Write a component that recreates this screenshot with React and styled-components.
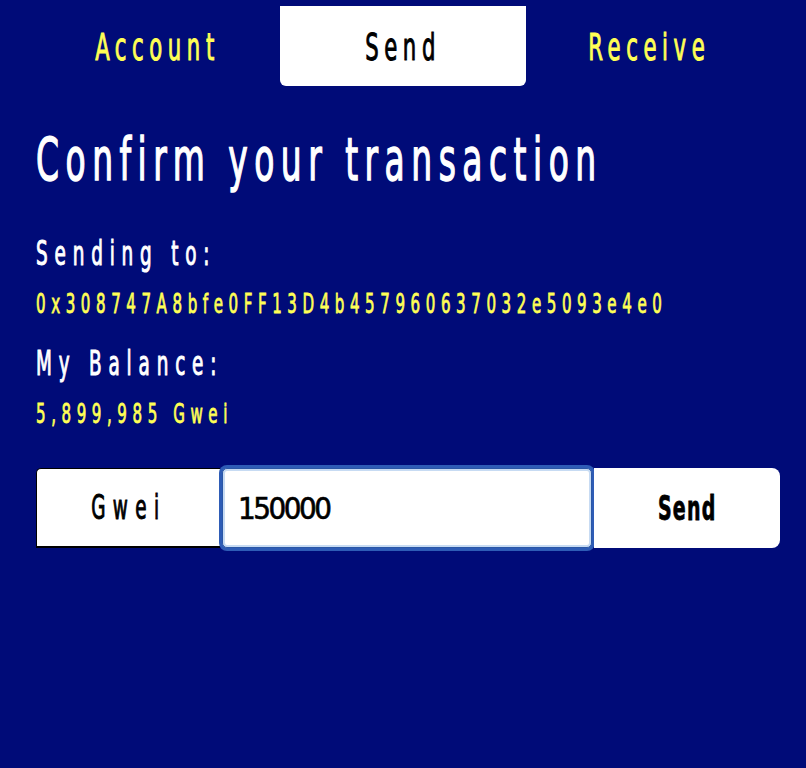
import React, { useState } from 'react'
import styled, { createGlobalStyle } from 'styled-components'

const FONT = `"DejaVu Sans Condensed", "DejaVu Sans", sans-serif`
// no narrow display face is installed, so condense the glyphs horizontally
const SQUEEZE = 0.62

const GlobalStyle = createGlobalStyle`
  html, body {
    margin: 0;
    background: #000b78;
    min-height: 100%;
  }
  body {
    font-family: ${FONT};
    color: #fff;
  }
`

const Page = styled.div`
  min-height: 768px;
  background: #000b78;
  padding: 6px 34px 0;
  box-sizing: border-box;
`

const Tabs = styled.nav`
  display: grid;
  grid-template-columns: repeat(3, 246px);
`

const Tab = styled.div`
  height: 80px;
  display: flex;
  align-items: center;
  justify-content: center;
  color: ${p => (p.$active ? '#000' : '#ffff55')};
  background: ${p => (p.$active ? '#fff' : 'transparent')};
  border-radius: 0 0 6px 6px;
  cursor: pointer;
`

const TabText = styled.span`
  display: inline-block;
  font-size: 38px;
  letter-spacing: 9px;
  padding-top: 2px;
  -webkit-text-stroke: 1px currentColor;
  transform: scaleX(${SQUEEZE});
  transform-origin: center;
`

const Body = styled.main`
  padding-left: 2px;
`

const Title = styled.h1`
  margin: 38px 0 0;
  font-size: 59px;
  line-height: 72px;
  font-weight: normal;
  letter-spacing: 10.5px;
  white-space: nowrap;
  -webkit-text-stroke: 1.4px currentColor;
  transform: scaleX(${SQUEEZE});
  transform-origin: left;
`

const Label = styled.h3`
  margin: ${p => p.$top}px 0 0;
  font-size: 33px;
  line-height: 40px;
  font-weight: normal;
  letter-spacing: 11px;
  white-space: nowrap;
  -webkit-text-stroke: 1px currentColor;
  transform: scaleX(${SQUEEZE});
  transform-origin: left;
`

const Value = styled.p`
  margin: 14px 0 0;
  font-size: 27px;
  line-height: 32px;
  color: #ffff55;
  letter-spacing: 9px;
  white-space: nowrap;
  -webkit-text-stroke: 0.8px currentColor;
  transform: scaleX(${SQUEEZE});
  transform-origin: left;
`

const Row = styled.div`
  display: flex;
  align-items: stretch;
  height: 80px;
  margin-top: 38px;
  width: 744px;
`

const Unit = styled.div`
  flex: 0 0 184px;
  box-sizing: border-box;
  background: #fff;
  color: #000;
  border: 1px solid #000;
  border-bottom-width: 2px;
  border-right: none;
  border-radius: 5px 0 0 0;
  display: flex;
  align-items: center;
  justify-content: center;
`

const UnitText = styled.span`
  display: inline-block;
  font-size: 33px;
  letter-spacing: 12px;
  -webkit-text-stroke: 1px currentColor;
  transform: scaleX(${SQUEEZE});
`

const Amount = styled.input`
  flex: 0 0 370px;
  box-sizing: border-box;
  margin: 0 0 0 2px;
  padding: 0 0 0 15px;
  font-family: ${FONT};
  font-size: 31px;
  letter-spacing: -2.5px;
  -webkit-text-stroke: 0.6px currentColor;
  color: #000;
  background: #fff;
  border: 1px solid #2b57a6;
  border-radius: 5px;
  box-shadow: inset 0 0 0 2px #c7dbf3, 0 0 0 3px #2e5cb6;
  outline: none;
`

const SendButton = styled.button`
  flex: 0 0 186px;
  margin: 0 0 0 2px;
  padding: 0;
  border: none;
  border-radius: 0 8px 8px 0;
  background: #fff;
  color: #000;
  font-family: ${FONT};
  cursor: pointer;
`

const SendText = styled.span`
  display: inline-block;
  font-size: 34px;
  font-weight: bold;
  letter-spacing: 2px;
  -webkit-text-stroke: 0.8px currentColor;
  transform: scaleX(${SQUEEZE});
`

export default function App() {
  const [amount, setAmount] = useState('150000')
  return (
    <Page>
      <GlobalStyle />
      <Tabs>
        <Tab><TabText>Account</TabText></Tab>
        <Tab $active><TabText>Send</TabText></Tab>
        <Tab><TabText>Receive</TabText></Tab>
      </Tabs>
      <Body>
        <Title>Confirm your transaction</Title>
        <Label $top={38}>Sending to:</Label>
        <Value>0x308747A8bfe0FF13D4b457960637032e5093e4e0</Value>
        <Label $top={24}>My Balance:</Label>
        <Value>5,899,985 Gwei</Value>
        <Row>
          <Unit><UnitText>Gwei</UnitText></Unit>
          <Amount value={amount} onChange={e => setAmount(e.target.value)} />
          <SendButton><SendText>Send</SendText></SendButton>
        </Row>
      </Body>
    </Page>
  )
}
